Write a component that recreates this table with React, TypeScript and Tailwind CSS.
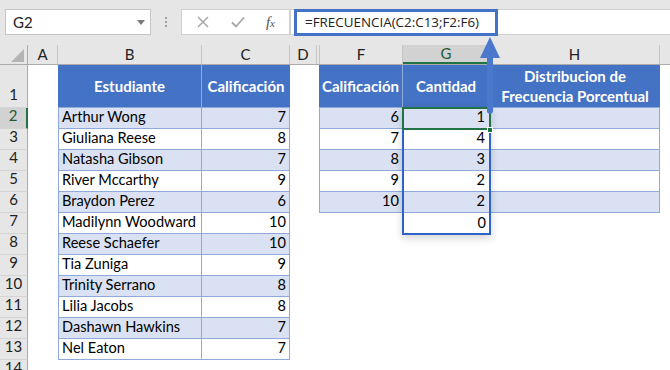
import React from 'react';

const students: [string, number][] = [
  ['Arthur Wong', 7],
  ['Giuliana Reese', 8],
  ['Natasha Gibson', 7],
  ['River Mccarthy', 9],
  ['Braydon Perez', 6],
  ['Madilynn Woodward', 10],
  ['Reese Schaefer', 10],
  ['Tia Zuniga', 9],
  ['Trinity Serrano', 8],
  ['Lilia Jacobs', 8],
  ['Dashawn Hawkins', 7],
  ['Nel Eaton', 7],
];

const bins = [6, 7, 8, 9, 10];
const counts = [1, 4, 3, 2, 2, 0];

const cellText = "text-[14.6px] leading-none text-black font-['Lato',sans-serif]";

function ColHeader({ label, w, active }: { label: string; w: string; active?: boolean }) {
  return (
    <div
      className={`${w} shrink-0 h-full flex items-center justify-center border-r border-[#c6c6c6] text-[15px] ${
        active ? 'bg-[#d2d2d2] text-[#1e5a32] border-b-2 border-b-[#217346]' : 'text-[#222]'
      }`}
    >
      {label}
    </div>
  );
}

function RowHeader({ n, active }: { n: number; active?: boolean }) {
  return (
    <div
      className={`w-[28px] shrink-0 h-full flex items-end justify-center pb-[2px] border-b border-[#d4d4d4] text-[15px] ${
        active
          ? 'bg-[#d2d2d2] text-[#1e5a32] border-r-2 border-r-[#217346]'
          : 'bg-[#e6e6e6] text-[#222] border-r border-r-[#ababab]'
      }`}
    >
      {n}
    </div>
  );
}

function DataRow({ r }: { r: number }) {
  const i = r - 2;
  const s = students[i];
  const bandBC = i % 2 === 0 ? 'bg-[#d9e1f2]' : 'bg-white';
  const inFH = i < 5;
  const bandFH = i % 2 === 0 ? 'bg-[#d9e1f2]' : 'bg-white';
  return (
    <div className="flex h-[21px]">
      <RowHeader n={r} active={r === 2} />
      <div className="w-[30px] shrink-0" />
      <div className={`w-[144px] shrink-0 flex items-end pl-[3px] pb-[3px] border-l border-r border-b border-[#8eaadb] ${bandBC} ${cellText}`}>
        {s[0]}
      </div>
      <div className={`w-[88px] shrink-0 flex items-end justify-end pr-[3px] pb-[3px] border-r border-b border-[#8eaadb] ${bandBC} ${cellText}`}>
        {s[1]}
      </div>
      <div className="w-[29px] shrink-0" />
      {inFH ? (
        <>
          <div className={`w-[84px] shrink-0 flex items-end justify-end pr-[3px] pb-[3px] border-l border-r border-b border-[#8eaadb] ${bandFH} ${cellText}`}>
            {bins[i]}
          </div>
          <div className={`w-[87px] shrink-0 flex items-end justify-end pr-[4px] pb-[3px] border-r border-b border-[#8eaadb] ${bandFH} ${cellText}`}>
            {counts[i]}
          </div>
          <div className={`w-[170px] shrink-0 border-r border-b border-[#8eaadb] ${bandFH}`} />
        </>
      ) : (
        <>
          <div className="w-[84px] shrink-0" />
          <div className={`w-[87px] shrink-0 flex items-end justify-end pr-[4px] pb-[3px] ${cellText}`}>
            {i === 5 ? counts[5] : ''}
          </div>
        </>
      )}
    </div>
  );
}

export default function App() {
  return (
    <div className="relative w-[670px] h-[370px] overflow-hidden bg-white font-['Lato',sans-serif]">
      {/* barra de fórmulas */}
      <div className="h-[45px] bg-[#e6e6e6] flex items-start pt-[9px] pl-[5px]">
        <div className="w-[146px] h-[26px] bg-white border border-[#c6c6c6] flex items-center justify-between pl-[7px] pr-[5px]">
          <span className="text-[15px] text-[#222]">G2</span>
          <span className="w-0 h-0 border-l-[4px] border-r-[4px] border-t-[5px] border-l-transparent border-r-transparent border-t-[#7a7a7a]" />
        </div>
        <div className="w-[30px] h-[26px] flex flex-col items-center justify-center gap-[2px]">
          <span className="w-[2px] h-[2px] bg-[#a0a0a0]" />
          <span className="w-[2px] h-[2px] bg-[#a0a0a0]" />
          <span className="w-[2px] h-[2px] bg-[#a0a0a0]" />
        </div>
        <div className="w-[109px] h-[26px] bg-white border border-[#d0d0d0] flex items-center justify-around px-[4px]">
          <svg width="14" height="14" viewBox="0 0 14 14">
            <path d="M2 2 L12 12 M12 2 L2 12" stroke="#a8a8a8" strokeWidth="1.5" />
          </svg>
          <svg width="16" height="14" viewBox="0 0 16 14">
            <path d="M2 7.5 L6 11.5 L14 2.5" stroke="#a8a8a8" strokeWidth="1.8" fill="none" />
          </svg>
          <span className="text-[15px] italic text-[#555] font-['Liberation_Serif',serif]">
            f<span className="text-[11px]">x</span>
          </span>
        </div>
        <div className="flex-1 h-[26px] bg-white border-y border-l border-[#d0d0d0] pl-[3px]">
          <div className="w-[204px] -mt-[1px] h-[27px] border-[3px] border-[#4472c4] flex items-center pl-[8px] text-[13.4px] text-[#222] font-['Open_Sans',sans-serif]">
            =FRECUENCIA(C2:C13;F2:F6)
          </div>
        </div>
      </div>

      {/* encabezados de columna */}
      <div className="flex h-[20px] bg-[#e6e6e6] border-b border-[#ababab]">
        <div className="w-[28px] shrink-0 h-full border-r border-[#ababab] flex items-end justify-end pr-[3px] pb-[2px]">
          <span className="w-0 h-0 border-b-[13px] border-l-[13px] border-b-[#b4b4b4] border-l-transparent" />
        </div>
        <ColHeader label="A" w="w-[30px]" />
        <ColHeader label="B" w="w-[144px]" />
        <ColHeader label="C" w="w-[88px]" />
        <ColHeader label="D" w="w-[27px]" />
        <div className="w-[3px] shrink-0 h-full border-r border-[#c6c6c6]" />
        <ColHeader label="F" w="w-[83px]" />
        <ColHeader label="G" w="w-[87px]" active />
        <ColHeader label="H" w="w-[170px]" />
      </div>

      {/* fila 1: encabezados de tabla */}
      <div className="flex h-[43px]">
        <RowHeader n={1} />
        <div className="w-[30px] shrink-0" />
        <div className="w-[144px] shrink-0 flex items-center justify-center bg-[#4472c4] border-r border-b border-[#8eaadb] text-white font-bold text-[15px]">
          Estudiante
        </div>
        <div className="w-[88px] shrink-0 flex items-center justify-center bg-[#4472c4] border-b border-[#8eaadb] text-white font-bold text-[15px]">
          Calificación
        </div>
        <div className="w-[29px] shrink-0" />
        <div className="w-[84px] shrink-0 flex items-center justify-center bg-[#4472c4] border-r border-b border-[#8eaadb] text-white font-bold text-[15px]">
          Calificación
        </div>
        <div className="w-[87px] shrink-0 flex items-center justify-center bg-[#4472c4] border-r border-b border-[#8eaadb] text-white font-bold text-[15px]">
          Cantidad
        </div>
        <div className="w-[170px] shrink-0 flex flex-col items-center justify-center bg-[#4472c4] border-b border-[#8eaadb] text-white font-bold text-[15px] leading-[20px]">
          <span>Distribucion de</span>
          <span>Frecuencia Porcentual</span>
        </div>
      </div>

      {Array.from({ length: 12 }, (_, k) => (
        <DataRow key={k} r={k + 2} />
      ))}
      <div className="flex h-[21px]">
        <RowHeader n={14} />
      </div>

      {/* rango G2:G7 */}
      <div className="absolute left-[402px] top-[107px] w-[89px] h-[128px] border-2 border-[#2f63c8] shadow-[0_3px_8px_rgba(0,0,0,0.18)]" />
      {/* celda activa G2 */}
      <div className="absolute left-[402px] top-[107px] w-[89px] h-[23px] border-2 border-[#217346]" />
      <div className="absolute left-[487px] top-[127px] w-[6px] h-[6px] bg-[#217346] border border-white" />

      {/* flecha */}
      <svg className="absolute left-0 top-0 pointer-events-none" width="670" height="370">
        <path d="M480 58 L490 37 L500 58 Z" fill="#4a78cc" />
        <path d="M487 57 H493 V112 Q490 116 487 112 Z" fill="#4a78cc" />
      </svg>
    </div>
  );
}
